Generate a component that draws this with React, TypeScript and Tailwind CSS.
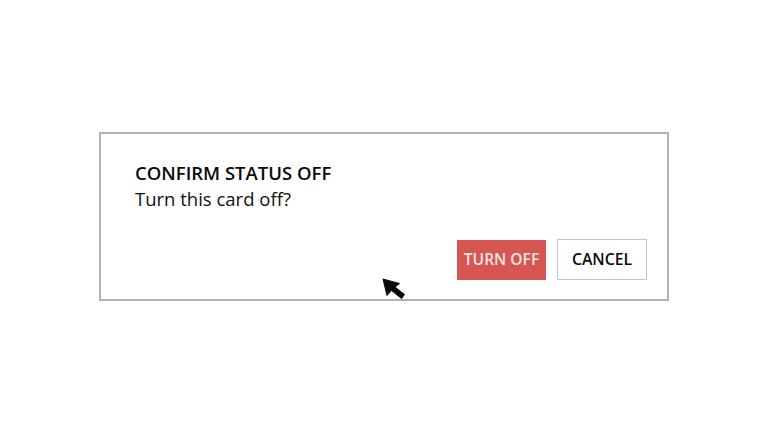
import React from "react";

const font = "font-['Open_Sans',sans-serif]";

export default function App() {
  return (
    <div className={`w-[768px] h-[432px] bg-white pl-[99px] pt-[132px] overflow-hidden ${font}`}>
      <div className="relative w-[570px] h-[169px] border-2 border-[#b3b3b3] flex flex-col pl-[34px] pr-[20px] pt-[26px]">
        <h2 className="text-[18.5px] leading-[26px] font-semibold text-[#0a0a0a]">CONFIRM STATUS OFF</h2>
        <p className="text-[18.5px] leading-[26px] text-[#111]">Turn this card off?</p>
        <div className="flex justify-end gap-[11px] mt-[27px]">
          <button className="w-[89px] h-[40px] mt-px bg-[#d75553] text-[#f8e6e4] text-[15.6px] font-semibold">TURN OFF</button>
          <button className="w-[90px] h-[41px] bg-white border border-[#c4c4c4] text-[#0a0a0a] text-[15.8px] font-semibold">CANCEL</button>
        </div>
        {/* mouse pointer */}
        <svg className="absolute left-[281px] top-[144px]" width="24" height="22" viewBox="0 0 24 22">
          <path d="M1 1 L17.5 5.5 L13 9 L22.5 16.5 L19.5 20.5 L9.5 12.5 L5 17.5 Z" fill="#0a0a0a" stroke="#0a0a0a" strokeWidth="1" strokeLinejoin="round" />
        </svg>
      </div>
    </div>
  );
}
